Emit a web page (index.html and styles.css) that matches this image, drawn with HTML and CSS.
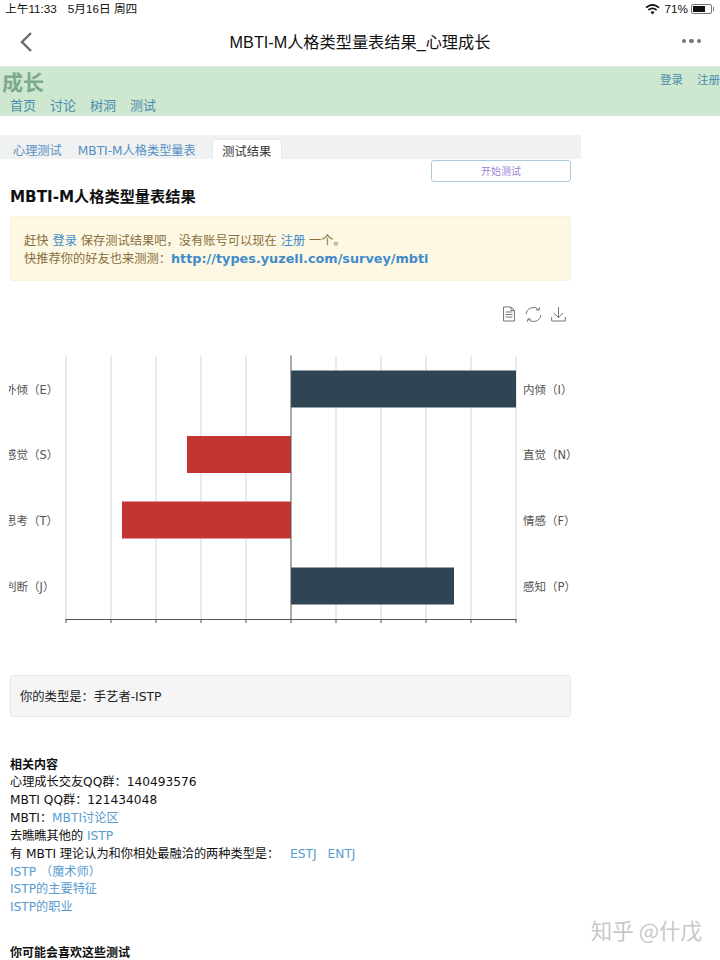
FILE: index.html
```html
<!DOCTYPE html>
<html lang="zh-CN">
<head>
<meta charset="utf-8">
<title>MBTI-M人格类型量表结果_心理成长</title>
<link rel="stylesheet" href="styles.css">
</head>
<body>
<div class="status">
  <div class="status-left"><span>上午11:33</span><span>5月16日 周四</span></div>
  <div class="status-right">
    <svg class="wifi" width="15" height="11" viewBox="0 0 15 11"><path d="M1 3.6C5 .2 10 .2 14 3.6" fill="none" stroke="#111" stroke-width="1.7"/><path d="M3.4 6C5.9 3.9 9.1 3.9 11.6 6" fill="none" stroke="#111" stroke-width="1.7"/><path d="M5.4 7.9 7.5 10.5 9.6 7.9C8.3 7 6.7 7 5.4 7.9Z" fill="#111"/></svg>
    <span>71%</span>
    <span class="battery"><span class="battery-fill"></span></span><span class="battery-cap"></span>
  </div>
</div>
<header class="nav">
  <svg class="back" width="14" height="22" viewBox="0 0 14 22"><path d="M12 2 3 11l9 9" fill="none" stroke="#6b6b6b" stroke-width="2.4"/></svg>
  <div class="nav-title">MBTI-M人格类型量表结果_心理成长</div>
  <div class="dots"><i></i><i></i><i></i></div>
</header>
<div class="site">
  <div class="site-left">
    <div class="logo">成长</div>
    <nav class="menu"><a>首页</a><a>讨论</a><a>树洞</a><a>测试</a></nav>
  </div>
  <div class="site-right"><a>登录</a><a>注册</a></div>
</div>
<div class="crumbs">
  <a>心理测试</a><a>MBTI-M人格类型量表</a><span class="crumb-active">测试结果</span>
</div>
<main class="content">
  <div class="action-row"><a class="start">开始测试</a></div>
  <h1>MBTI-M人格类型量表结果</h1>
  <div class="alert">
    <div>赶快 <a>登录</a> 保存测试结果吧，没有账号可以现在 <a>注册</a> 一个。</div>
    <div>快推荐你的好友也来测测：<a class="url">http://types.yuzeli.com/survey/mbti</a></div>
  </div>
  <div class="tools">
    <svg width="14" height="16" viewBox="0 0 14 16" fill="none" stroke="#777" stroke-width="1"><path d="M1.5 1H9l3.5 3.5V15h-11Z"/><path d="M3.5 6h7M3.5 8.5h7M3.5 11h7M9 1v3.5h3.5"/></svg>
    <svg width="17" height="17" viewBox="0 0 17 17" fill="none" stroke="#777" stroke-width="1"><path d="M1.2 8A7.3 7.3 0 0 1 14 4"/><path d="M15.8 9A7.3 7.3 0 0 1 3 13"/><path d="M14.6 1.2 14 4.2l-3-.4M2.4 15.8 3 12.8l3 .4"/></svg>
    <svg width="15" height="16" viewBox="0 0 15 16" fill="none" stroke="#777" stroke-width="1"><path d="M7.5 1v10.5M2.8 7l4.7 4.7L12.2 7M.7 11v4h13.6v-4"/></svg>
  </div>
  <svg class="chart" width="720" height="290" viewBox="0 345 720 290">
    <defs><clipPath id="labelclip"><rect x="9" y="345" width="570" height="290"/></clipPath></defs>
    <g stroke="#ddd" stroke-width="1.2">
      <path d="M66 356V619M111 356V619M156 356V619M201 356V619M246 356V619M336 356V619M381 356V619M426 356V619M471 356V619M516 356V619"/>
    </g>
    <rect class="bar-dark" x="291" y="370.5" width="225" height="37"/>
    <rect class="bar-red" x="187" y="436" width="104" height="37"/>
    <rect class="bar-red" x="122" y="501.5" width="169" height="37"/>
    <rect class="bar-dark" x="291" y="567.5" width="163" height="37"/>
    <g stroke="#555" stroke-width="1">
      <path d="M291 355.5V623M65.5 619.5H516.5M66 619v4M111 619v4M156 619v4M201 619v4M246 619v4M336 619v4M381 619v4M426 619v4M471 619v4M516 619v4"/>
    </g>
    <g class="axis-label" clip-path="url(#labelclip)">
      <text x="5" y="394">外倾（E）</text>
      <text x="5" y="459">感觉（S）</text>
      <text x="5" y="525">思考（T）</text>
      <text x="5" y="591">判断（J）</text>
      <text x="523" y="394">内倾（I）</text>
      <text x="523" y="459">直觉（N）</text>
      <text x="523" y="525">情感（F）</text>
      <text x="523" y="591">感知（P）</text>
    </g>
  </svg>
  <div class="result">你的类型是：手艺者-ISTP</div>
  <section class="related">
    <h2>相关内容</h2>
    <div>心理成长交友QQ群：140493576</div>
    <div>MBTI QQ群：121434048</div>
    <div>MBTI：<a>MBTI讨论区</a></div>
    <div>去瞧瞧其他的 <a>ISTP</a></div>
    <div>有 MBTI 理论认为和你相处最融洽的两种类型是： <a class="gap">ESTJ</a><a class="gap2">ENTJ</a></div>
    <div><a>ISTP （魔术师）</a></div>
    <div><a>ISTP的主要特征</a></div>
    <div><a>ISTP的职业</a></div>
    <h2 class="more">你可能会喜欢这些测试</h2>
  </section>
</main>
<div class="watermark">知乎 @什戊</div>
</body>
</html>
```
FILE: styles.css
```css
* { box-sizing: border-box; }
html, body { margin: 0; padding: 0; }
body {
  width: 720px;
  height: 960px;
  overflow: hidden;
  position: relative;
  background: #fff;
  color: #111;
  font: 12px/18px "DejaVu Sans", "Noto Sans CJK SC", sans-serif;
}
a { color: #428bca; text-decoration: none; }

.status {
  height: 18px;
  padding: 0 6px 0 5px;
  display: flex;
  justify-content: space-between;
  align-items: center;
  font: 11.7px/18px "Liberation Sans", "Noto Sans CJK SC", sans-serif;
  color: #111;
}
.status-left { display: flex; gap: 11px; }
.status-right { display: flex; align-items: center; gap: 3px; }
.wifi { margin-right: 2px; }
.battery {
  width: 21px; height: 10px;
  border: 1px solid #777;
  border-radius: 2px;
  padding: 1px;
  display: block;
}
.battery-fill { display: block; width: 68%; height: 100%; background: #111; }
.battery-cap { width: 1px; height: 4px; background: #777; margin-left: -2px; }

.nav {
  height: 48px;
  display: grid;
  grid-template-columns: 60px 1fr 60px;
  align-items: center;
}
.back { margin-left: 19px; }
.nav-title {
  text-align: center;
  font: 16.2px/24px "Liberation Sans", "Noto Sans CJK SC", sans-serif;
  color: #111;
}
.dots { display: flex; justify-content: flex-end; gap: 3px; padding: 0 19px 2px 0; }
.dots i { width: 4.5px; height: 4.5px; border-radius: 50%; background: #777; }

.site {
  height: 50px;
  background: #cde8cf;
  border-top: 1px solid #dde9dd;
  border-bottom: 2px solid #d8e6d8;
  display: flex;
  justify-content: space-between;
  overflow: hidden;
}
.site-left { padding-left: 2px; }
.logo {
  font: bold 21px/27px "Noto Sans CJK SC", sans-serif;
  color: #7ca98c;
  margin-top: 1px;
}
.menu { display: flex; gap: 14px; margin-left: 8px; font-size: 13px; line-height: 21px; }
.menu a, .site-right a { color: #4b8bb0; }
.site-right { display: flex; gap: 14px; font-size: 11.5px; line-height: 26px; }

.crumbs {
  width: 581px;
  height: 24px;
  margin-top: 19px;
  background: #f0f1f1;
  padding-left: 13px;
  display: flex;
  align-items: flex-end;
  font-size: 12.2px;
  line-height: 16px;
}
.crumbs a { margin-right: 16px; color: #5590c4; }
.crumb-active {
  background: #fff;
  color: #333;
  width: 70px;
  height: 20px;
  text-align: center;
  line-height: 24px;
  border-radius: 3px 3px 0 0;
  border: 1px solid #e8e8e8;
  border-bottom: 0;
}

.content { padding: 0 149px 0 10px; }
.action-row { display: flex; justify-content: flex-end; height: 23px; margin-top: 1px; }
.start {
  width: 140px;
  height: 22px;
  border: 1px solid #a9cbdc;
  border-radius: 3px;
  text-align: center;
  font-size: 10px;
  line-height: 22px;
  color: #9d7fd8;
}
h1 {
  margin: 3px 0 0;
  font: bold 15.2px/22px "DejaVu Sans", "Noto Sans CJK SC", sans-serif;
  color: #111;
}
.alert {
  margin-top: 8px;
  height: 65px;
  background: #fcf8e3;
  border: 1px solid #f8f2df;
  border-radius: 3px;
  padding: 15px 13px;
  color: #8a6d3b;
  font-size: 12.25px;
  line-height: 18px;
}
.alert a { color: #428bca; }
.alert .url { font-weight: bold; font-size: 12.8px; }
.tools {
  height: 18px;
  margin-top: 24px;
  display: flex;
  justify-content: flex-end;
  align-items: center;
  gap: 9px;
  padding-right: 5px;
}
.chart { display: block; margin: 22px 0 0 -10px; height: 290px; }
.bar-dark { fill: #2f4554; }
.bar-red { fill: #c23531; }
.axis-label text { font: 11.5px "DejaVu Sans", "Noto Sans CJK SC", sans-serif; fill: #555; }
.result {
  margin-top: 40px;
  height: 42px;
  background: #f5f5f5;
  border: 1px solid #e6e6e6;
  border-radius: 3px;
  padding: 12px 9px;
  font-size: 12.3px;
  line-height: 18px;
  color: #222;
}
.related { margin-top: 39px; font-size: 12.2px; line-height: 17.9px; white-space: nowrap; }
.related a { color: #5a9bce; }
h2 { margin: 0; font: bold 12px/18px "DejaVu Sans", "Noto Sans CJK SC", sans-serif; }
h2.more { margin-top: 27px; }
.gap { margin-left: 7px; }
.gap2 { margin-left: 11px; }
.watermark {
  position: absolute;
  right: 18px;
  bottom: 17px;
  font: 21.5px/26px "Noto Sans CJK SC", sans-serif;
  color: rgba(150, 150, 150, .55);
}
```
